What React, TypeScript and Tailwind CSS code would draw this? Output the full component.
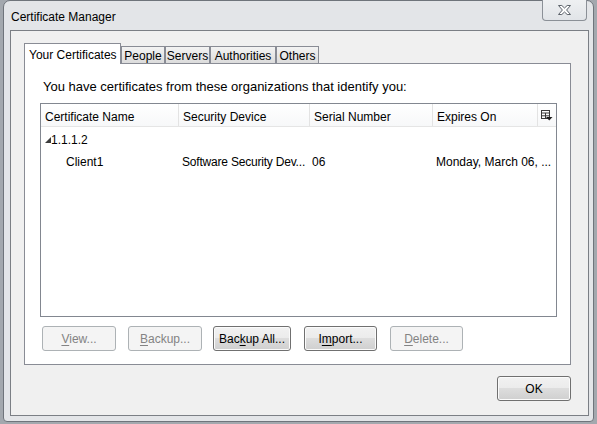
import React from "react";

type Btn = { pre: string; key: string; post: string; w: number; ml: number; enabled: boolean };

const buttons: Btn[] = [
  { pre: "", key: "V", post: "iew...", w: 74, ml: 0, enabled: false },
  { pre: "", key: "B", post: "ackup...", w: 74, ml: 12, enabled: false },
  { pre: "Bac", key: "k", post: "up All...", w: 78, ml: 11, enabled: true },
  { pre: "I", key: "m", post: "port...", w: 73, ml: 13, enabled: true },
  { pre: "", key: "D", post: "elete...", w: 73, ml: 13, enabled: false },
];

const enabledCls =
  "h-[25px] rounded-[3px] border border-[#707070] bg-[linear-gradient(to_bottom,#f2f2f2_0%,#ebebeb_50%,#dddddd_50%,#cfcfcf_100%)] shadow-[inset_0_0_0_1px_#fbfbfb] text-black flex items-center justify-center pt-[1px]";
const disabledCls =
  "h-[25px] rounded-[3px] border border-[#adb2b5] bg-[#f4f4f4] text-[#838383] flex items-center justify-center pt-[1px]";

const tabs = [
  { label: "People", w: 44 },
  { label: "Servers", w: 45 },
  { label: "Authorities", w: 66 },
  { label: "Others", w: 43 },
];

const cols = [
  { label: "Certificate Name", w: 138 },
  { label: "Security Device", w: 131 },
  { label: "Serial Number", w: 123 },
  { label: "Expires On", w: 105 },
];

function CloseGlyph() {
  return (
    <svg width="15" height="12" viewBox="0 0 15 12">
      <polygon
        points="1.5,1.5 4.8,1.5 7.5,4 10.2,1.5 13.5,1.5 9.6,6 13.5,10.5 10.2,10.5 7.5,8 4.8,10.5 1.5,10.5 5.4,6"
        fill="#ffffff"
        stroke="#5d636b"
        strokeWidth="1"
        strokeLinejoin="round"
      />
    </svg>
  );
}

function ColumnPicker() {
  return (
    <svg width="12" height="11" viewBox="0 0 12 11">
      <rect x="0.5" y="0.5" width="8" height="8" fill="#fff" stroke="#3a3a3a" />
      <line x1="0.5" y1="3" x2="8.5" y2="3" stroke="#3a3a3a" />
      <line x1="4.5" y1="3" x2="4.5" y2="8.5" stroke="#3a3a3a" />
      <line x1="0.5" y1="5.8" x2="8.5" y2="5.8" stroke="#3a3a3a" />
      <polygon points="5,7 11.5,7 8.25,10.5" fill="#1e1e1e" />
    </svg>
  );
}

function Expander() {
  return (
    <svg width="6" height="6" viewBox="0 0 6 6">
      <polygon points="6,0 6,6 0,6" fill="#3c3c3c" />
    </svg>
  );
}

export default function App() {
  return (
    <div className="w-[597px] h-[424px] overflow-hidden bg-[#a3a8ae] pl-[3px] font-['Liberation_Sans',Arial,sans-serif] text-[12px] text-black">
      <div className="w-[591px] h-[422px] rounded-t-[7px] rounded-b-[4px] border border-[#6f747b] bg-[#e3e5e8] flex flex-col">
        {/* title bar */}
        <div className="h-[29px] flex items-start justify-between">
          <div className="pl-[7px] pt-[9px] leading-[15px]">Certificate Manager</div>
          <div className="-mt-px mr-[6px] w-[45px] h-[21px] rounded-b-[4px] border border-[#8b9097] border-t-0 bg-[linear-gradient(to_bottom,#eef0f2,#e1e4e8)] flex items-center justify-center">
            <CloseGlyph />
          </div>
        </div>

        {/* client area */}
        <div className="ml-[6px] w-[579px] h-[386px] border border-[#7b7f85] bg-[#f0f0f0] pl-[13px] pt-[12px]">
          {/* tab strip */}
          <div className="flex items-end h-[20px]">
            <div className="relative z-10 -mb-px h-[21px] w-[97px] border border-b-0 border-[#898c95] bg-white pl-[4px] pt-[3px] leading-[16px]">
              Your Certificates
            </div>
            {tabs.map((t) => (
              <div
                key={t.label}
                style={{ width: t.w }}
                className="h-[17px] border border-b-0 border-[#898c95] bg-[linear-gradient(to_bottom,#f3f3f3,#dcdcdc)] flex items-center justify-center pt-[2px] leading-[15px]"
              >
                {t.label}
              </div>
            ))}
          </div>

          {/* tab panel */}
          <div className="w-[547px] h-[302px] border border-[#898c95] bg-white pl-[15px] pt-[14px]">
            <div className="ml-[3px] h-[15px] pt-[1px] leading-[15px] text-[13px] whitespace-nowrap">
              You have certificates from these organizations that identify you:
            </div>

            <div className="mt-[10px] w-[517px] h-[214px] border border-[#828790] bg-white flex flex-col">
              {/* header */}
              <div className="h-[23px] flex border-b border-[#e5e5e5] bg-[linear-gradient(to_bottom,#ffffff,#f7f8f9)]">
                {cols.map((c) => (
                  <div
                    key={c.label}
                    style={{ width: c.w }}
                    className="h-full border-r border-[#e3e3e3] pl-[4px] pt-[3px] flex items-center"
                  >
                    {c.label}
                  </div>
                ))}
                <div className="flex-1 flex items-center justify-center pt-[1px]">
                  <ColumnPicker />
                </div>
              </div>

              {/* rows */}
              <div className="h-[22px] flex items-center pl-[4px] pt-[3px]">
                <Expander />
                <span>1.1.1.2</span>
              </div>
              <div className="h-[22px] flex items-center pt-[3px]">
                <div style={{ width: cols[0].w }} className="pl-[25px]">Client1</div>
                <div style={{ width: cols[1].w }} className="pl-[3px] whitespace-nowrap tracking-[-0.2px]">Software Security Dev...</div>
                <div style={{ width: cols[2].w }} className="pl-[2px]">06</div>
                <div style={{ width: cols[3].w }} className="pl-[3px] whitespace-nowrap">Monday, March 06, ...</div>
              </div>
            </div>

            <div className="mt-[9px] ml-[2px] flex">
              {buttons.map((b) => (
                <div
                  key={b.post}
                  style={{ width: b.w, marginLeft: b.ml }}
                  className={b.enabled ? enabledCls : disabledCls}
                >
                  <span>
                    {b.pre}
                    <span className="underline underline-offset-2">{b.key}</span>
                    {b.post}
                  </span>
                </div>
              ))}
            </div>
          </div>

          {/* OK */}
          <div className="mt-[11px] w-[547px] flex justify-end">
            <div className={`${enabledCls} w-[74px]`}>OK</div>
          </div>
        </div>
      </div>
    </div>
  );
}
